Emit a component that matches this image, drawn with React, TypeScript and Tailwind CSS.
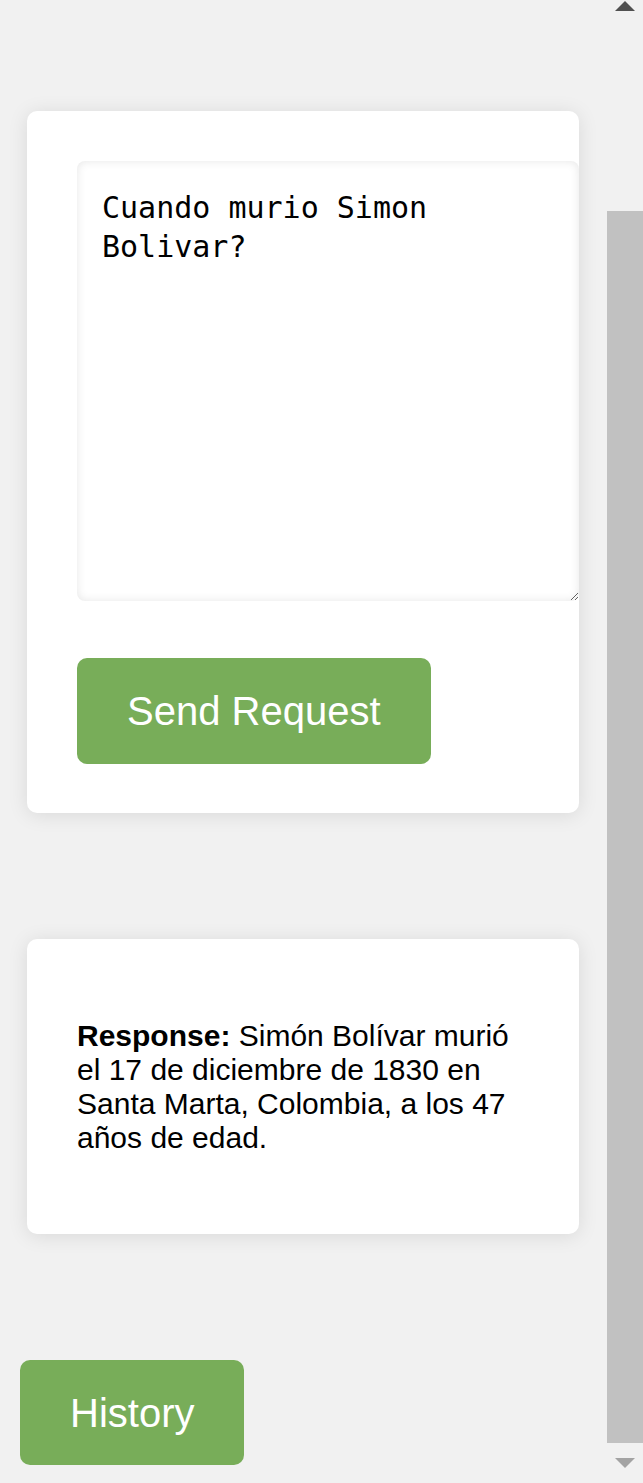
import React from 'react';

const ScrollArrow = ({ up, color }: { up?: boolean; color: string }) => (
  <svg width="20" height="10" viewBox="0 0 20 10">
    <polygon points={up ? '10,0 20,10 0,10' : '0,0 20,0 10,10'} fill={color} />
  </svg>
);

const App = () => {
  return (
    <div className="flex min-h-[1483px] overflow-hidden bg-[#f1f1f1] font-['Liberation_Sans',Arial,sans-serif] text-black">
      <main className="flex min-w-0 flex-1 flex-col pt-[111px]">
        <section className="ml-[27px] mr-[28px] flex flex-col items-start rounded-[10px] bg-white px-[50px] pt-[50px] pb-[49px] shadow-[0_2px_20px_rgba(0,0,0,0.1)]">
          <textarea
            className="box-border h-[440px] w-[502px] shrink-0 rounded-[8px] border-0 px-[25px] pt-[27px] pb-[25px] font-['DejaVu_Sans_Mono',monospace] text-[30px] leading-[39px] text-black shadow-[inset_0_0_10px_rgba(0,0,0,0.1)] outline-none"
            defaultValue="Cuando murio Simon Bolivar?"
          />
          <button className="mt-[57px] rounded-[10px] bg-[#78ad59] px-[50px] py-[30px] text-[40px] leading-[46px] text-white">
            Send Request
          </button>
        </section>

        <section className="ml-[27px] mr-[28px] mt-[126px] rounded-[10px] bg-white px-[50px] pt-[50px] pb-[49px] shadow-[0_2px_20px_rgba(0,0,0,0.1)]">
          <p className="my-[30px] text-[30px] leading-[34px]">
            <strong className="font-bold">Response:</strong> Simón Bolívar murió el 17 de
            diciembre de 1830 en Santa Marta, Colombia, a los 47 años de edad.
          </p>
        </section>

        <div className="mt-[126px] pl-[20px]">
          <button className="rounded-[10px] bg-[#78ad59] px-[50px] pt-[30px] pb-[29px] text-[40px] leading-[46px] text-white">
            History
          </button>
        </div>
      </main>

      {/* scrollbar as seen in the screenshot */}
      <div className="flex w-[36px] shrink-0 flex-col items-center bg-[#f1f1f1]">
        <div className="pt-[1px]">
          <ScrollArrow up color="#505050" />
        </div>
        <div className="mt-[200px] h-[1232px] w-full bg-[#c1c1c1]" />
        <div className="mt-[15px]">
          <ScrollArrow color="#a3a3a3" />
        </div>
      </div>
    </div>
  );
};

export default App;
